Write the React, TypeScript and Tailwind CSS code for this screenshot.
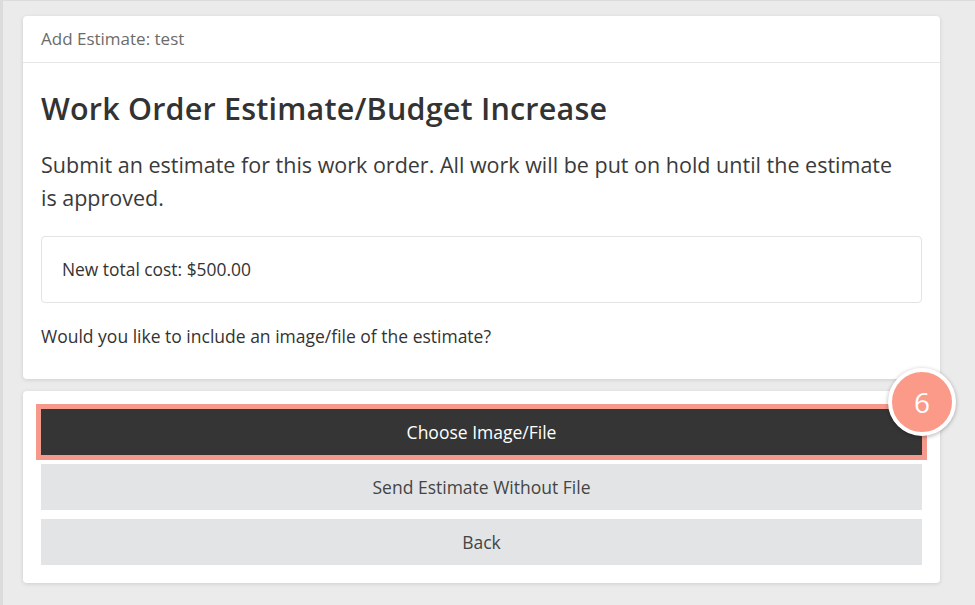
import React from 'react';

const font = { fontFamily: '"Open Sans", "Noto Sans", sans-serif' };

export default function App() {
  return (
    <div
      className="w-[975px] h-[605px] bg-[#ebebeb] border-l-[3px] border-t border-[#dcdcdc] pl-[20px] pr-[35px] pt-[15px] flex flex-col gap-3 overflow-hidden"
      style={font}
    >
      {/* Estimate card */}
      <div className="bg-white rounded shadow-[0_1px_4px_rgba(0,0,0,0.12)]">
        <div className="h-[47px] px-[18px] flex items-center border-b border-[#e6e6e6] text-[17px] text-[#6b6b6b]">
          Add Estimate: test
        </div>
        <div className="px-[18px] pt-[25px] pb-[32px]">
          <h1 className="text-[30.5px] leading-[40px] font-semibold tracking-[0.2px] text-[#333]">
            Work Order Estimate/Budget Increase
          </h1>
          <p className="mt-[20px] text-[21.5px] leading-[33px] text-[#3a3a3a] pr-4">
            Submit an estimate for this work order. All work will be put on hold until the estimate is approved.
          </p>
          <div className="mt-[22px] h-[67px] border border-[#e3e3e3] rounded flex items-center px-5 text-[17.4px] text-[#333]">
            New total cost: $500.00
          </div>
          <p className="mt-[22px] text-[17.5px] text-[#333] leading-[22px]">
            Would you like to include an image/file of the estimate?
          </p>
        </div>
      </div>

      {/* Actions card */}
      <div className="relative bg-white rounded shadow-[0_1px_4px_rgba(0,0,0,0.12)] px-[18px] pt-[18px] pb-[18px] flex flex-col gap-[9px]">
        <button className="h-[46px] w-full bg-[#353535] text-white text-[17.5px] outline outline-[5px] outline-[#f4998b]">
          Choose Image/File
        </button>
        <button className="h-[46px] w-full bg-[#e3e4e6] text-[#444] text-[17.5px]">
          Send Estimate Without File
        </button>
        <button className="h-[46px] w-full bg-[#e3e4e6] text-[#444] text-[17.5px]">
          Back
        </button>

        <div className="absolute right-[-16px] top-[-23px] w-[68px] h-[68px] rounded-full bg-[#fb9a89] border-[4px] border-white shadow-[0_1px_4px_rgba(0,0,0,0.3)] flex items-center justify-center text-white text-[28px]">
          6
        </div>
      </div>
    </div>
  );
}
